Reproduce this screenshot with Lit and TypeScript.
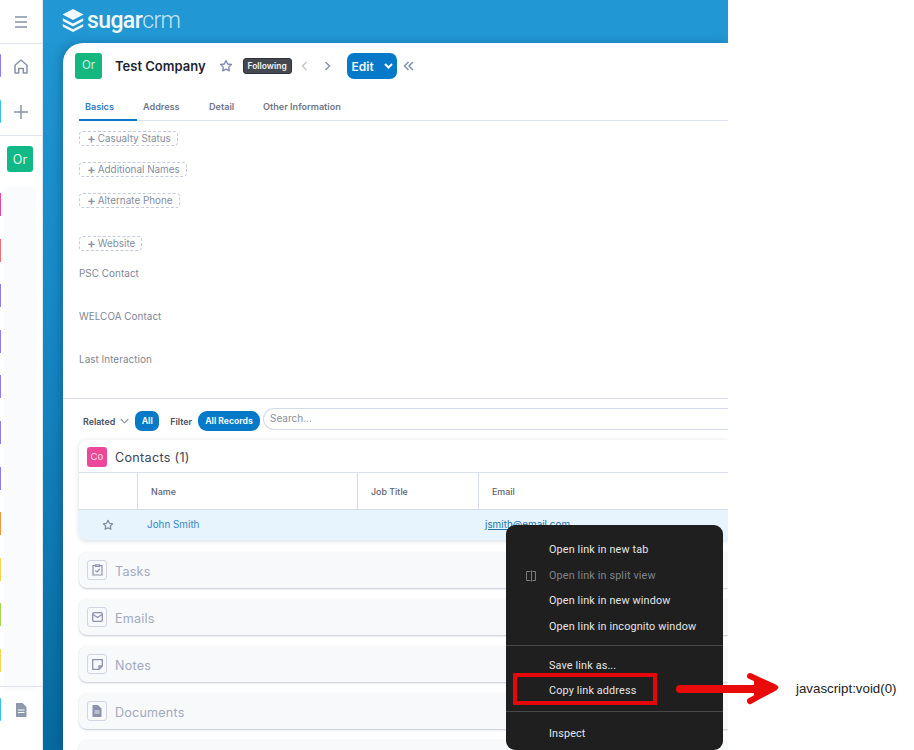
import { LitElement, html, css, svg } from "lit";
import { customElement } from "lit/decorators.js";

const railColors = ["#ec4899","#f26d6d","#8b7cf6","#8b7cf6","#8b7cf6","#8b7cf6","#8b7cf6","#fb923c","#fcd34d","#a3d94f","#fcd34d"];

const star = svg`<path d="M8 1.800l1.900 3.900 4.300.6-3.100 3 .7 4.300L8 11.600l-3.800 2 .7-4.300-3.100-3 4.300-.6z" fill="none" stroke="currentColor" stroke-width="1.500" stroke-linejoin="round"/>`;

@customElement("app-root")
export class AppRoot extends LitElement {
  static styles = css`
    :host { display: block; width: 914px; height: 750px; position: relative; overflow: hidden; background: #fff; font-family: Inter, "Liberation Sans", sans-serif; }
    .page { display: flex; width: 728px; height: 750px; overflow: hidden; }
    .side { width: 43px; flex: none; box-sizing: border-box; border-right: 1px solid #e4e8ef; display: flex; flex-direction: column; background: #fff; color: #8792a8; }
    .burger { height: 44px; flex: none; box-sizing: border-box; border-bottom: 1px solid #dfe4ec; display: flex; align-items: center; justify-content: center; }
    .nav { height: 46px; flex: none; display: flex; align-items: center; justify-content: center; position: relative; }
    .mark { position: absolute; left: 0; top: 11px; width: 1px; height: 23px; border-radius: 0 2px 2px 0; }
    .top { height: 92px; flex: none; box-sizing: border-box; border-bottom: 1px solid #dfe4ec; }
    .top .nav:first-child { margin-top: -1px; }
    .or { width: 26px; height: 26px; border-radius: 3px; background: #12b886; color: #e4f8f0; font-size: 12.5px; display: flex; align-items: center; justify-content: center; flex: none; }
    .orwrap { height: 51px; flex: none; box-sizing: border-box; padding: 10px 0 0 7px; }
    .list { flex: none; height: 500px; position: relative; }
    .shade { position: absolute; left: 4px; right: 6px; top: 0; bottom: -4px; background: #fafbfc; }
    .rail { position: relative; height: 45.6px; }
    .rail i { position: absolute; left: 0; top: 6px; width: 1px; height: 23px; display: block; }
    .foot { flex: 1; border-top: 1px solid #dfe4ec; margin-top: -1px; position: relative; z-index: 1; }

    .main { flex: 1; min-width: 0; display: flex; flex-direction: column; background: linear-gradient(180deg, #2198d4 0%, #1687c4 45%, #076a9e 100%); }
    .bar { height: 43px; flex: none; box-sizing: border-box; padding: 9px 0 0 19px; display: flex; align-items: flex-start; gap: 3px; background: #2197d3; }
    .brand { font-family: Roboto, "Liberation Sans", sans-serif; font-size: 23px; line-height: 23px; letter-spacing: -0.6px; color: #f2f9fd; font-weight: 500; }
    .brand span { font-weight: 300; color: #c4e5f5; }
    .card { flex: 1; margin-left: 20px; background: #fff; border-radius: 20px 0 0 0; box-shadow: -3px 0 8px rgba(0,40,80,.25); min-width: 0; display: flex; flex-direction: column; overflow: hidden; }
    .head { display: flex; align-items: center; height: 26px; margin-top: 10px; padding-left: 12px; flex: none; }
    .head .or { width: 27px; height: 26px; background: #14b87e; font-size: 11.5px; color: #cdf1e2; padding-bottom: 2px; box-sizing: border-box; }
    .name { font-size: 13px; font-weight: 600; color: #1d2433; margin-left: 13px; letter-spacing: 0; }
    .star { color: #7d89ab; margin-left: 13px; display: block; }
    .follow { margin-left: 10px; width: 49px; height: 16px; box-sizing: border-box; border-radius: 3px; background: #45494f; border: 1px solid #2f3338; color: #f2f2f2; font-size: 8.5px; font-weight: 600; display: flex; align-items: center; justify-content: center; padding-bottom: 1px; }
    .chev { display: block; }
    .ch-a { margin-left: 9px; }
    .ch-b { margin-left: 16px; }
    .ch-c { margin-left: 6px; }
    .edit { margin-left: 16px; width: 50px; height: 26px; border-radius: 7px; background: #0679c8; color: #f3f9fd; font-size: 12px; font-weight: 600; display: flex; align-items: center; box-sizing: border-box; padding-left: 5px; gap: 10px; }
    .tabs { margin: 21px 0 0 16px; height: 21px; flex: none; box-sizing: border-box; border-bottom: 1px solid #dde3ee; display: flex; font-size: 9.1px; font-weight: 600; color: #6f7787; }
    .tab { height: 21px; box-sizing: border-box; padding: 1px 6px 0; line-height: 11px; }
    .tab.on { color: #2b7cc6; border-bottom: 2px solid #0679c8; width: 58px; }
    .t2 { width: 66px; }
    .t3 { width: 54px; }
    .fields { flex: none; height: 278px; box-sizing: border-box; padding-left: 16px; border-bottom: 1px solid #d8dfea; display: flex; flex-direction: column; align-items: flex-start; font-size: 9.9px; color: #7e8694; }
    .add { height: 15px; box-sizing: border-box; border: 1px dashed #c4ccdb; border-radius: 4px; padding: 0 6px 0 7px; display: flex; align-items: center; gap: 2px; color: #858d9c; line-height: 1; }
    .add b { font-weight: 600; font-size: 13px; line-height: 12px; color: #8a93a6; padding-bottom: 2px; }
    .f1 { margin-top: 10px; }
    .f2 { margin-top: 16px; }
    .f3 { margin-top: 28px; }
    .f4 { margin-top: 16px; }
    .label { height: 43px; flex: none; line-height: 13px; letter-spacing: 0.05px; }
    .filter { display: flex; align-items: center; height: 20px; margin-top: 12px; padding-left: 20px; flex: none; font-size: 8.9px; font-weight: 600; color: #484f5e; }
    .rel { margin: 0 6px 0 5px; display: block; }
    .fl { margin: 0 6px 0 11px; }
    .pill { background: #0679c8; color: #eef7fd; height: 20px; border-radius: 7px; display: flex; align-items: center; justify-content: center; font-size: 8.6px; font-weight: 700; box-sizing: border-box; }
    .p1 { width: 24px; }
    .p2 { width: 62px; border-radius: 9px; }
    .search { flex: 1; height: 22px; margin: -3px 0 0 3px; align-self: flex-start; box-sizing: border-box; border: 1px solid #d3dbe8; border-right: 0; border-radius: 11px 0 0 11px; padding: 0 0 2px 6px; display: flex; align-items: center; font-size: 10px; font-weight: 400; color: #878f9d; }
    .panel { margin: 9px 0 0 16px; height: 100px; flex: none; border-radius: 8px 0 0 8px; box-shadow: 0 1px 5px rgba(30,50,90,.18); display: flex; flex-direction: column; overflow: hidden; }
    .ptitle { height: 33px; flex: none; box-sizing: border-box; border-bottom: 1px solid #dbe1ec; padding: 7px 0 0 8px; display: flex; gap: 8px; font-size: 12.6px; color: #3c4454; letter-spacing: 0.3px; }
    .tile { width: 20px; height: 20px; border-radius: 3px; background: #ec4899; color: #fbdcea; font-size: 9.6px; display: flex; align-items: center; justify-content: center; box-sizing: border-box; padding-bottom: 2px; letter-spacing: 0; flex: none; }
    .ptitle span { line-height: 21px; }
    .thead { height: 37px; flex: none; display: flex; box-sizing: border-box; border-bottom: 1px solid #d5dce9; font-size: 8.9px; color: #5a6270; font-weight: 500; }
    .th { box-sizing: border-box; border-right: 1px solid #d5dce9; padding: 13px 0 0 13px; flex: none; }
    .w0 { width: 59px; }
    .w1 { width: 220px; }
    .w2 { width: 121px; }
    .w3 { border: 0; }
    .row { flex: 1; background: #e7f3fd; position: relative; font-size: 9.9px; display: flex; align-items: center; color: #2f89c7; }
    .row svg { margin-left: 23px; color: #7a8499; display: block; }
    .row .n { margin-left: 33px; width: 338px; padding-bottom: 3px; }
    .row .m { text-decoration: underline; color: #2274a9; padding-bottom: 3px; }
    .col { margin: 11px 0 0 16px; height: 36px; flex: none; box-sizing: border-box; border-radius: 8px 0 0 8px; background: #f8f9fb; box-shadow: 0 1px 2px rgba(40,60,90,.28); padding: 8px 0 0 8px; display: flex; gap: 8px; font-size: 12.6px; color: #a2a9bd; letter-spacing: 0.2px; }
    .col span { line-height: 23px; }
    .ico { width: 20px; height: 20px; box-sizing: border-box; border: 1px solid #ced5e3; border-radius: 3px; background: #f8f9fb; color: #8b93ac; display: flex; align-items: center; justify-content: center; flex: none; }
    .col.first { margin-top: 12px; }

    .menu { position: absolute; left: 506px; top: 525px; width: 217px; height: 225px; background: #1f1f1f; border-radius: 9px; box-sizing: border-box; padding: 13px 0 0 43px; color: #e6e6e6; font-size: 10.8px; font-family: Roboto, "Liberation Sans", sans-serif; letter-spacing: 0.15px; }
    .mi { height: 25.6px; line-height: 24px; white-space: nowrap; position: relative; }
    .mi.dim { color: #80858a; }
    .mi svg { position: absolute; left: -24px; top: 6px; color: #797d80; display: block; }
    .sep { height: 1px; background: #484848; margin: 4.4px 0 8px -43px; }
    .sep.b { margin: 6px 0 10px -43px; }
    .redbox { position: absolute; left: 513px; top: 673px; width: 144px; height: 32px; box-sizing: border-box; border: 4px solid #e4080b; }
    .arrow { position: absolute; left: 674px; top: 670px; display: block; }
    .note { position: absolute; left: 796px; top: 681px; font-family: "Liberation Sans", sans-serif; font-size: 13.3px; line-height: 15px; color: #222; }
  `;

  render() {
    return html`
      <div class="page">
        <aside class="side">
          <div class="burger">
            <svg width="14" height="12" viewBox="0 0 14 12"><path d="M1 1h12M1 6h12M1 11h12" stroke="#8792a8" stroke-width="1.400" fill="none"/></svg>
          </div>
          <div class="top">
            <div class="nav">
              <span class="mark" style="background:#8b7cf6"></span>
              <svg width="14" height="15" viewBox="0 0 14 15" fill="none" stroke="#8792a8" stroke-width="1.500" stroke-linejoin="round"><path d="M1 6.300L7 1l6 5.300V14H9.300V9.400H4.700V14H1z"/></svg>
            </div>
            <div class="nav">
              <span class="mark" style="background:#38bdf8"></span>
              <svg width="14" height="14" viewBox="0 0 14 14"><path d="M7 0v14M0 7h14" stroke="#8792a8" stroke-width="1.500"/></svg>
            </div>
          </div>
          <div class="orwrap"><div class="or">Or</div></div>
          <div class="list">
            <div class="shade"></div>
            ${railColors.map((c) => html`<div class="rail"><i style="background:${c}"></i></div>`)}
          </div>
          <div class="foot">
            <div class="nav">
              <span class="mark" style="background:#38bdf8"></span>
              <svg width="12" height="14" viewBox="0 0 12 14"><path d="M1 0h6.500L11.500 4v10H1z" fill="#8f99ad"/><path d="M3 7h6.500M3 9.500h6.500" stroke="#fff" stroke-width="1"/></svg>
            </div>
            <div class="nav"><svg width="12" height="14" viewBox="0 0 12 14"><circle cx="6" cy="7" r="5" fill="none" stroke="#8792a8" stroke-width="1.500"/></svg></div>
          </div>
        </aside>
        <main class="main">
          <div class="bar">
            <svg width="22" height="23" viewBox="0 0 22 23" fill="#f2f9fd" style="display:block">
              <path d="M11 0l10.500 5.500L11 11 .5 5.500z"/>
              <path d="M.8 9.300L11 14.600l10.200-5.300v2.800L11 17.400.8 12.100z"/>
              <path d="M.8 14.900L11 20.200l10.200-5.300v2.800L11 23 .8 17.700z"/>
            </svg>
            <div class="brand">sugar<span>crm</span></div>
          </div>
          <section class="card">
            <div class="head">
              <div class="or">Or</div>
              <div class="name">Test Company</div>
              <svg class="star" width="14" height="14" viewBox="0 0 16 16">${star}</svg>
              <div class="follow">Following</div>
              <svg class="chev ch-a" width="7" height="10" viewBox="0 0 7 10"><path d="M5.500 1L1.500 5l4 4" fill="none" stroke="#c2c7d1" stroke-width="1.500"/></svg>
              <svg class="chev ch-b" width="7" height="10" viewBox="0 0 7 10"><path d="M1.500 1l4 4-4 4" fill="none" stroke="#8b94aa" stroke-width="1.500"/></svg>
              <div class="edit">Edit
                <svg width="9" height="6" viewBox="0 0 9 6"><path d="M1 1l3.500 3.500L8 1" fill="none" stroke="#fff" stroke-width="2"/></svg>
              </div>
              <svg class="chev ch-c" width="11" height="10" viewBox="0 0 11 10"><path d="M5.500 1l-4 4 4 4M10 1L6 5l4 4" fill="none" stroke="#7f90ad" stroke-width="1.500"/></svg>
            </div>
            <div class="tabs">
              <div class="tab on">Basics</div>
              <div class="tab t2">Address</div>
              <div class="tab t3">Detail</div>
              <div class="tab">Other Information</div>
            </div>
            <div class="fields">
              <div class="add f1"><b>+</b>Casualty Status</div>
              <div class="add f2"><b>+</b>Additional Names</div>
              <div class="add f2"><b>+</b>Alternate Phone</div>
              <div class="add f3"><b>+</b>Website</div>
              <div class="label f4">PSC Contact</div>
              <div class="label">WELCOA Contact</div>
              <div class="label">Last Interaction</div>
            </div>
            <div class="filter">
              <span>Related</span>
              <svg class="rel" width="9" height="6" viewBox="0 0 9 6"><path d="M.7 1l3.800 3.800L8.300 1" fill="none" stroke="#8b94a6" stroke-width="1.100"/></svg>
              <div class="pill p1">All</div>
              <span class="fl">Filter</span>
              <div class="pill p2">All Records</div>
              <div class="search">Search...</div>
            </div>
            <div class="panel">
              <div class="ptitle"><div class="tile">Co</div><span>Contacts (1)</span></div>
              <div class="thead">
                <div class="th w0"></div>
                <div class="th w1">Name</div>
                <div class="th w2">Job Title</div>
                <div class="th w3">Email</div>
              </div>
              <div class="row">
                <svg width="12" height="12" viewBox="0 0 16 16">${star}</svg>
                <span class="n">John Smith</span>
                <span class="m">jsmith@email.com</span>
              </div>
            </div>
            <div class="col first"><div class="ico"><svg width="11" height="12" viewBox="0 0 11 12" fill="none" stroke="#8b93ac" stroke-width="1.200"><path d="M3 1.500H1v9.500h9V1.500H8M3.500 .8h4v1.700h-4z"/><path d="M3.300 6.500L5 8l2.800-3"/></svg></div><span>Tasks</span></div>
            <div class="col"><div class="ico"><svg width="11" height="10" viewBox="0 0 11 10" fill="none" stroke="#8b93ac" stroke-width="1.300"><rect x=".7" y=".7" width="9.600" height="8.600" rx="1.300"/><path d="M1 2.500l4.500 3 4.500-3"/></svg></div><span>Emails</span></div>
            <div class="col"><div class="ico"><svg width="11" height="11" viewBox="0 0 11 11" fill="none" stroke="#8b93ac" stroke-width="1.300"><path d="M.7.7h9.600v6.300L7 10.300H.7zM10.300 7H7v3.300"/></svg></div><span>Notes</span></div>
            <div class="col"><div class="ico"><svg width="10" height="12" viewBox="0 0 10 12"><path d="M.5 0h5.500l3.500 3.500V12H.5z" fill="#8b93ac"/><path d="M2.500 6h5M2.500 8h5" stroke="#f8f9fb" stroke-width=".9"/></svg></div><span>Documents</span></div>
            <div class="col"></div>
          </section>
        </main>
      </div>
      <div class="menu">
        <div class="mi">Open link in new tab</div>
        <div class="mi dim"><svg width="12" height="12" viewBox="0 0 12 12" fill="none" stroke="#797d80" stroke-width="1"><path d="M5.500 1.500H1.500v9h4M6.500 .5v11M7.500 1.500h3v9h-3"/></svg>Open link in split view</div>
        <div class="mi">Open link in new window</div>
        <div class="mi">Open link in incognito window</div>
        <div class="sep"></div>
        <div class="mi">Save link as...</div>
        <div class="mi">Copy link address</div>
        <div class="sep b"></div>
        <div class="mi">Inspect</div>
      </div>
      <div class="redbox"></div>
      <svg class="arrow" width="108" height="36" viewBox="0 0 108 36">
        <path d="M6 19H96" stroke="#e90a0a" stroke-width="8" stroke-linecap="round" fill="none"/>
        <path d="M76 6L101 17.500 76 31" stroke="#e90a0a" stroke-width="6" stroke-linecap="round" stroke-linejoin="round" fill="none"/>
        <path d="M80 8L105 17.500 80 29z" fill="#e90a0a"/>
      </svg>
      <div class="note">javascript:void(0)</div>
    `;
  }
}
